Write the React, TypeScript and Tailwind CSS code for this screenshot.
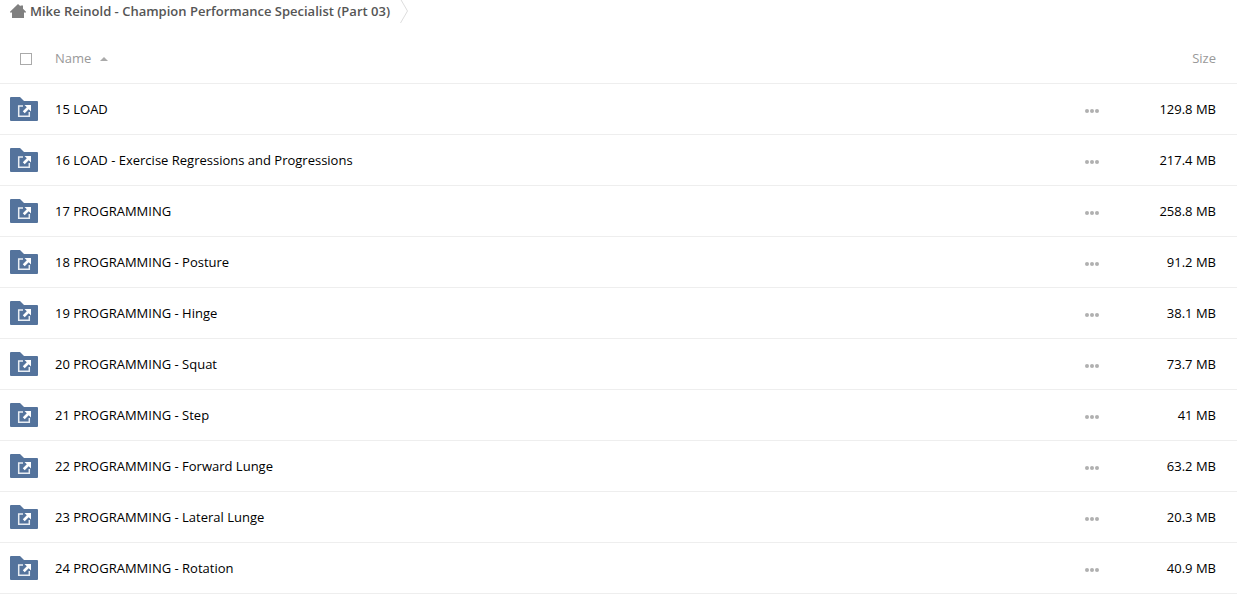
const folders = [
  { name: "15 LOAD", size: "129.8 MB" },
  { name: "16 LOAD - Exercise Regressions and Progressions", size: "217.4 MB" },
  { name: "17 PROGRAMMING", size: "258.8 MB" },
  { name: "18 PROGRAMMING - Posture", size: "91.2 MB" },
  { name: "19 PROGRAMMING - Hinge", size: "38.1 MB" },
  { name: "20 PROGRAMMING - Squat", size: "73.7 MB" },
  { name: "21 PROGRAMMING - Step", size: "41 MB" },
  { name: "22 PROGRAMMING - Forward Lunge", size: "63.2 MB" },
  { name: "23 PROGRAMMING - Lateral Lunge", size: "20.3 MB" },
  { name: "24 PROGRAMMING - Rotation", size: "40.9 MB" },
];

function HomeIcon() {
  return (
    <svg width="16" height="14" viewBox="0 0 16 14" fill="#808080" aria-hidden="true">
      <path d="M8 0 10.500 2.300V1.500H13v3.200L16 7.700V8.500H14V14H2V8.500H0V7.700z" />
    </svg>
  );
}

function SharedFolderIcon() {
  return (
    <svg width="28" height="24" viewBox="0 0 28 24" className="block" aria-hidden="true">
      <path d="M0 1a1 1 0 0 1 1-1h9l4 4h13a1 1 0 0 1 1 1v18a1 1 0 0 1-1 1H1a1 1 0 0 1-1-1z" fill="#54739c" />
      <path d="M13 9H8.700v10.300h10.600V15" fill="none" stroke="#e9eef4" strokeWidth="1.500" />
      <path d="M14.500 8H21v6.500l-2.300-2.300-4 4-1.900-1.900 4-4z" fill="#fff" />
    </svg>
  );
}

function DotsIcon() {
  return (
    <svg width="14" height="4" viewBox="0 0 14 4" fill="#b0b0b0" className="block" aria-hidden="true">
      <circle cx="2" cy="2" r="2" />
      <circle cx="7" cy="2" r="2" />
      <circle cx="12" cy="2" r="2" />
    </svg>
  );
}

function Breadcrumb() {
  return (
    <nav aria-label="Breadcrumb" className="flex h-[22px] items-center pl-[10px]">
      <a href="#" className="flex items-center gap-1 font-semibold text-[#555]">
        <HomeIcon />
        Mike Reinold - Champion Performance Specialist (Part 03)
      </a>
      <svg width="8" height="24" viewBox="0 0 8 24" className="ml-[10px]" fill="none" stroke="#ddd" aria-hidden="true">
        <path d="M.5 0 7.500 12 .5 24" />
      </svg>
    </nav>
  );
}

export default function App() {
  return (
    <main className="bg-white font-['Open_Sans',sans-serif] text-[13px] leading-5 text-black">
      <Breadcrumb />
      <table className="mt-[10px] w-full table-fixed border-collapse">
        <thead>
          <tr className="h-[51px] border-b border-[#eee] text-[#999]">
            <th className="w-[55px] pt-1 pl-5 text-left">
              <input
                type="checkbox"
                aria-label="Select all"
                className="block size-3 appearance-none border border-[#aaa] bg-white checked:bg-[#54739c]"
              />
            </th>
            <th className="pt-0.5 text-left font-normal" aria-sort="ascending">
              <button type="button" className="flex items-center gap-2">
                Name
                <svg width="8" height="4" viewBox="0 0 8 4" fill="#aaa" className="mt-px ml-px" aria-hidden="true">
                  <path d="M4 0 8 4H0z" />
                </svg>
              </button>
            </th>
            <th className="w-16" aria-label="Actions" />
            <th className="w-[98px] pt-0.5 pr-[21px] text-right font-normal">
              <button type="button">Size</button>
            </th>
          </tr>
        </thead>
        <tbody>
          {folders.map((folder) => (
            <tr key={folder.name} className="h-[51px] border-b border-[#eee]">
              <td className="pl-[10px]">
                <SharedFolderIcon />
              </td>
              <td>
                <a href="#">{folder.name}</a>
              </td>
              <td>
                <button type="button" aria-label={`More actions for ${folder.name}`} className="block px-[10px] pt-3 pb-2">
                  <DotsIcon />
                </button>
              </td>
              <td className="pr-[21px] text-right">{folder.size}</td>
            </tr>
          ))}
        </tbody>
      </table>
    </main>
  );
}
